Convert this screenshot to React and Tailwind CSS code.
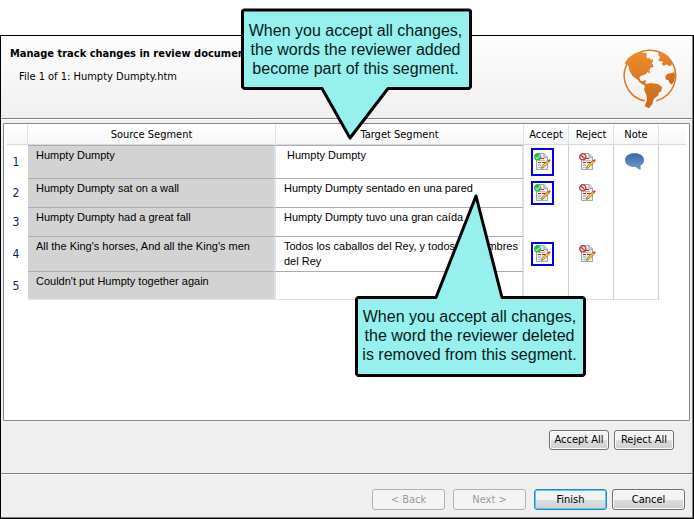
const rows = [
  { id: 1, h: "h-[33px]", source: "Humpty Dumpty", target: "\u00a0Humpty Dumpty", changed: true, note: true },
  { id: 2, h: "h-[29px]", source: "Humpty Dumpty sat on a wall", target: "Humpty Dumpty sentado en una pared", changed: true },
  { id: 3, h: "h-[29px]", source: "Humpty Dumpty had a great fall", target: "Humpty Dumpty tuvo una gran caída" },
  { id: 4, h: "h-[35px]", source: "All the King's horses, And all the King's men", target: "Todos los caballos del Rey, y todos los hombres del Rey", changed: true },
  { id: 5, h: "h-[29px]", source: "Couldn't put Humpty together again", target: "" },
];

function Globe() {
  return (
    <svg viewBox="60 47 180 189" className="h-[63px] w-[60px]" aria-hidden="true">
      <defs>
        <linearGradient id="globe" x1="0" y1="0" x2="0" y2="1">
          <stop offset="0" stopColor="#ee8b2a" />
          <stop offset="1" stopColor="#c9681a" />
        </linearGradient>
      </defs>
      <path d="M138 212A77 77 0 1 1 172 211" fill="none" stroke="#dd7a22" strokeWidth="4.500" />
      <path
        d="M77 99L88 83L104 71L122 65L143 68L143 84L154 84L154 88L162 87L162 93L158 99L162 103L163 111L153 112L153 118L148 119L153 124L152 130L146 124L140 132L125 137L121 143L125 151L132 153L138 148L141 153L138 158L145 161L153 158L177 161L189 170L187 182L179 188L178 195L164 206L160 221L150 234L137 228L144 209L142 193L135 178L138 166L121 156L117 149L101 138L92 123L88 106Z"
        fill="url(#globe)"
      />
      <path
        d="M178 62L196 69L211 81L221 97L218 104L210 108L204 102L194 106L188 101L193 94L178 91L183 80L178 75ZM226 122L228 136L226 151L218 163L210 156L208 149L201 148L199 136L206 130L222 127Z"
        fill="url(#globe)"
      />
    </svg>
  );
}

function ChangeIcon({ accept }) {
  return (
    <svg viewBox="0 0 17 17" className="block h-[17px] w-[17px]" aria-hidden="true">
      <path d="M2.500 .5H10L13.500 4V16.500H2.500Z" fill="#e6eeee" stroke="#9aa9a9" />
      <path d="M10 .5V4.500H13.500" fill="#cfdada" stroke="#9aa9a9" />
      <path d="M4 7.500H11M4 14.500H9" stroke="#b3bfbf" />
      <path d="M7 5.500H10M4 9.500H7M8 9.500H12" stroke="#ee1111" strokeWidth="1.200" />
      <path d="M4 12H7" stroke="#93a0a0" />
      <path d="M7.500 15.500L8.300 12.800L13.500 7.800L15 9.300L9.800 14.500Z" fill="#f3cf4a" stroke="#75601e" strokeWidth=".7" />
      <path d="M13.500 7.800L15.300 6L16.900 7.500L15 9.300Z" fill="#e04a3e" />
      {accept ? (
        <>
          <circle cx="3.600" cy="3.800" r="3.600" fill="#2fb345" />
          <path d="M1.600 4L3.100 5.600L6.300 2" fill="none" stroke="#a5efad" strokeWidth="1.200" />
        </>
      ) : (
        <>
          <circle cx="3.800" cy="3.800" r="3.100" fill="#f4dede" stroke="#bf3a3f" strokeWidth="1.300" />
          <path d="M1.700 1.700L5.900 5.900" stroke="#bf3a3f" strokeWidth="1.300" />
        </>
      )}
    </svg>
  );
}

function NoteIcon() {
  return (
    <svg viewBox="0 0 19 17" className="block h-[17px] w-[19px]" aria-hidden="true">
      <defs>
        <linearGradient id="note" x1="0" y1="0" x2="0" y2="1">
          <stop offset="0" stopColor="#3d66a6" />
          <stop offset="1" stopColor="#6f9bd3" />
        </linearGradient>
      </defs>
      <path d="M9.500 .5C15 .5 18.700 3 18.700 7C18.700 9.500 17.500 11.500 15 12.500L15.300 16.500L10.500 13.500C4 13.800 .3 11 .3 7C.3 3 4 .5 9.500 .5Z" fill="url(#note)" stroke="#4a72ae" strokeWidth=".6" />
    </svg>
  );
}

function IconButton({ label, framed, tall, children }) {
  return (
    <button
      type="button"
      aria-label={label}
      className={
        "flex w-[23px] items-center justify-center " +
        (tall ? "h-7 " : "h-6 ") +
        (framed ? "border-2 border-[#0000ee]" : "")
      }
    >
      {children}
    </button>
  );
}

const buttonBase = "rounded-[3px] border text-center leading-[18px] ";
const buttonLook = {
  normal: "border-[#707070] bg-linear-to-b from-[#f3f3f3] from-50% via-[#dddddd] via-50% to-[#cfcfcf] text-black shadow-[inset_0_0_0_1px_#fafafa]",
  primary: "mr-[-3px] border-[#3c7fb1] bg-linear-to-b from-[#f0f2f3] from-50% via-[#dcdfe1] via-50% to-[#cfd3d5] text-black shadow-[inset_0_0_0_1px_#45d0f5]",
  disabled: "border-[#b0b3b5] bg-[#f4f4f4] text-[#9a9a9a]",
};

function Button({ look = "normal", size = "h-[21px] w-[73px]", children }) {
  return (
    <button type="button" disabled={look === "disabled"} className={buttonBase + size + " " + buttonLook[look]}>
      {children}
    </button>
  );
}

function Callout({ place, textTop, outline, height, lines }) {
  return (
    <aside className={"absolute w-[232px] " + place}>
      <svg viewBox={"0 0 232 " + height} width="232" height={height} className="block" aria-hidden="true">
        <path d={outline} fill="#96f0ee" stroke="#000" strokeWidth="3" strokeLinejoin="round" />
      </svg>
      <p className={"absolute right-[3px] left-0 text-center font-['Liberation_Sans',Arial,sans-serif] text-[16px] leading-[19px] whitespace-nowrap text-[#0a1a1a] " + textTop}>
        {lines.map((line) => (
          <span key={line} className="block">{line}</span>
        ))}
      </p>
    </aside>
  );
}

const head = "border-r border-b border-r-[#dfe1e3] border-b-[#d8dadc] p-0 pt-px font-normal";
const segment = "border-t border-r-2 border-t-[#a9adb3] border-r-[#dde1e8] pt-[2px] pl-2 align-top font-['Liberation_Sans',Arial,sans-serif] leading-[15px] group-last:border-b group-last:border-b-[#e2e2e2]";
const action = "border-r border-[#d0d0d0] p-0 align-middle group-last:border-b group-last:border-b-[#e2e2e2] ";

export default function App() {
  return (
    <div className="relative bg-white pt-[35px] font-['DejaVu_Sans_Condensed','DejaVu_Sans',sans-serif] text-[11px] text-black">
      <main className="border border-black bg-[#efefef]">
        <div className="border-r border-b border-[#808080]">
          <header className="flex h-[83px] items-start justify-between border-b border-[#808080] bg-linear-to-b from-[#fdfdfd] to-[#f0f0f0] pt-[10px] pr-[13px] pl-[9px]">
            <div>
              <h1 className="text-[11px] leading-[15px] font-bold">Manage track changes in review documents</h1>
              <p className="mt-2 pl-[9px] leading-[15px]">File 1 of 1: Humpty Dumpty.htm</p>
            </div>
            <Globe />
          </header>

          <div className="border-t border-white px-[2px] pt-[3px]">
            <section className="h-[298px] rounded-[1px] border border-[#828790] bg-white px-[3px] pt-[1px]">
              <table className="w-full table-fixed border-separate border-spacing-0">
                <colgroup>
                  <col className="w-[21px]" />
                  <col />
                  <col />
                  <col className="w-[45px]" />
                  <col className="w-[45px]" />
                  <col className="w-[45px]" />
                  <col className="w-[27px]" />
                </colgroup>
                <thead>
                  <tr className="h-[20px] bg-linear-to-b from-white to-[#f5f6f7]">
                    <th className={head} aria-label="Number" />
                    <th className={head}>Source Segment</th>
                    <th className={head}>Target Segment</th>
                    <th className={head}>Accept</th>
                    <th className={head}>Reject</th>
                    <th className={head}>Note</th>
                    <th className="border-b border-[#d8dadc] p-0" aria-label="More" />
                  </tr>
                </thead>
                <tbody>
                  {rows.map((row) => (
                    <tr key={row.id} className={"group " + row.h}>
                      <th scope="row" className="p-0 pr-[3px] text-center text-[12px] font-normal text-[#0a246a]">{row.id}</th>
                      <td className={segment + " bg-[#d3d3d3]"}>{row.source}</td>
                      <td className={segment}>{row.target}</td>
                      <td className={action + "pl-[7px]"}>
                        {row.changed && <IconButton label="Accept changes" framed tall={row.note}><ChangeIcon accept /></IconButton>}
                      </td>
                      <td className={action + "pl-[7px]"}>
                        {row.changed && <IconButton label="Reject changes" tall={row.note}><ChangeIcon /></IconButton>}
                      </td>
                      <td className={action + "pl-[9px]"}>
                        {row.note && <IconButton label="Open note" tall><NoteIcon /></IconButton>}
                      </td>
                      <td />
                    </tr>
                  ))}
                </tbody>
              </table>
            </section>
          </div>

          <div className="flex h-[52px] justify-end gap-[5px] pt-[9px] pr-[18px]">
            <Button size="h-5 w-[60px]">Accept All</Button>
            <Button size="h-5 w-[60px]">Reject All</Button>
          </div>
          <footer className="flex h-[44px] justify-end gap-2 border-t border-[#808080] pt-[15px] pr-[7px] shadow-[inset_0_1px_0_#fff]">
            <Button look="disabled">&lt; Back</Button>
            <Button look="disabled">Next &gt;</Button>
            <Button look="primary">Finish</Button>
            <Button>Cancel</Button>
          </footer>
        </div>
      </main>

      <Callout
        place="top-[8px] left-[241px]"
        height={134}
        textTop="top-[13px]"
        outline="M3 2H228L229.500 3V79L228 80.500H147L109 130L81 80.500H3L1.500 79V3Z"
        lines={["When you accept all changes,", "the words the reviewer added", "become part of this segment."]}
      />
      <Callout
        place="top-[192px] left-[355px]"
        height={186}
        textTop="top-[115px]"
        outline="M3 105.500H81L121 4L147 105.500H228L229.500 107V182L228 183.500H3L1.500 182V107Z"
        lines={["When you accept all changes,", "the word the reviewer deleted", "is removed from this segment."]}
      />
    </div>
  );
}
